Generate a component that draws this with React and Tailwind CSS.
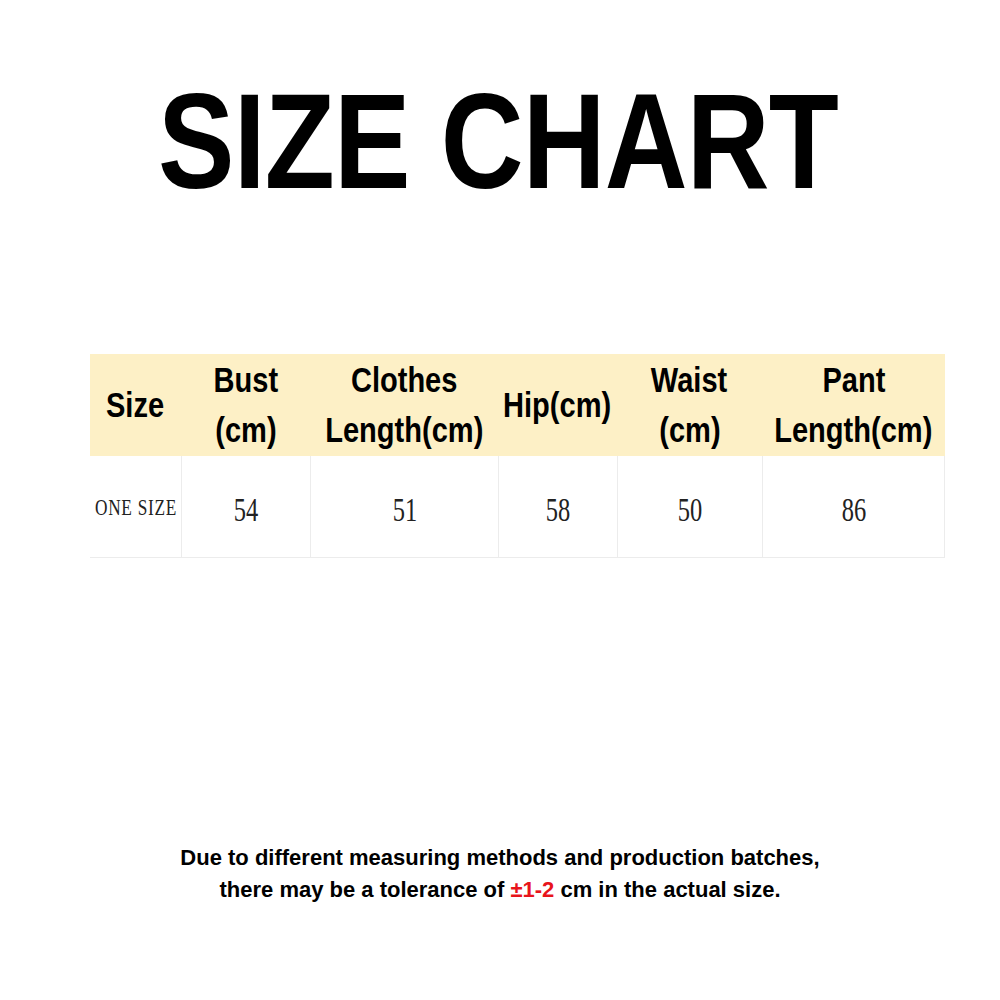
const cols = [
  { w: "w-[91px]", head: ["Size"], val: "ONE SIZE" },
  { w: "w-[129px]", head: ["Bust", "(cm)"], val: "54" },
  { w: "w-[188px]", head: ["Clothes", "Length(cm)"], val: "51" },
  { w: "w-[119px]", head: ["Hip(cm)"], val: "58" },
  { w: "w-[145px]", head: ["Waist", "(cm)"], val: "50" },
  { w: "w-[183px]", head: ["Pant", "Length(cm)"], val: "86" },
];

export default function App() {
  return (
    <div className="w-[1000px] h-[1000px] bg-white flex flex-col items-center text-black">
      {/* title */}
      <div className="mt-[66px] h-[150px] flex items-center justify-center">
        <span
          className="inline-block font-bold text-[135px] leading-none tracking-[-1px] scale-x-[0.85] -translate-x-[2px] whitespace-nowrap"
          style={{ fontFamily: '"Liberation Sans", Arial, sans-serif' }}
        >
          SIZE CHART
        </span>
      </div>

      {/* table */}
      <div className="mt-[138px] ml-[35px] flex">
        {cols.map((c, i) => (
          <div key={i} className={`${c.w} flex flex-col`}>
            <div
              className="h-[102px] bg-[#fdf0c6] flex flex-col items-center justify-center font-bold text-[35px] leading-[50px]"
              style={{ fontFamily: '"Liberation Sans", Arial, sans-serif' }}
            >
              {c.head.map((h) => (
                <span key={h} className="inline-block scale-x-[0.83] whitespace-nowrap">
                  {h}
                </span>
              ))}
            </div>
            <div
              className={`h-[102px] flex items-center justify-center border-b border-[#ececec] ${
                i > 0 ? "border-l" : ""
              } ${i === cols.length - 1 ? "border-r" : ""}`}
              style={{ fontFamily: '"Liberation Serif", "Times New Roman", serif' }}
            >
              {i === 0 ? (
                <span className="inline-block text-[24px] tracking-[1px] scale-x-[0.72] whitespace-nowrap text-[#222]">
                  {c.val}
                </span>
              ) : (
                <span className="inline-block text-[34px] scale-x-[0.72] translate-y-[3px] text-[#222]">
                  {c.val}
                </span>
              )}
            </div>
          </div>
        ))}
      </div>

      {/* note */}
      <div
        className="mt-[284px] flex flex-col items-center font-bold text-[22px] leading-[32px]"
        style={{ fontFamily: '"Liberation Sans", Arial, sans-serif' }}
      >
        <span className="inline-block whitespace-nowrap">
          Due to different measuring methods and production batches,
        </span>
        <span className="inline-block whitespace-nowrap">
          there may be a tolerance of <span className="text-[#e8141b]">±1-2</span> cm in the actual size.
        </span>
      </div>
    </div>
  );
}
